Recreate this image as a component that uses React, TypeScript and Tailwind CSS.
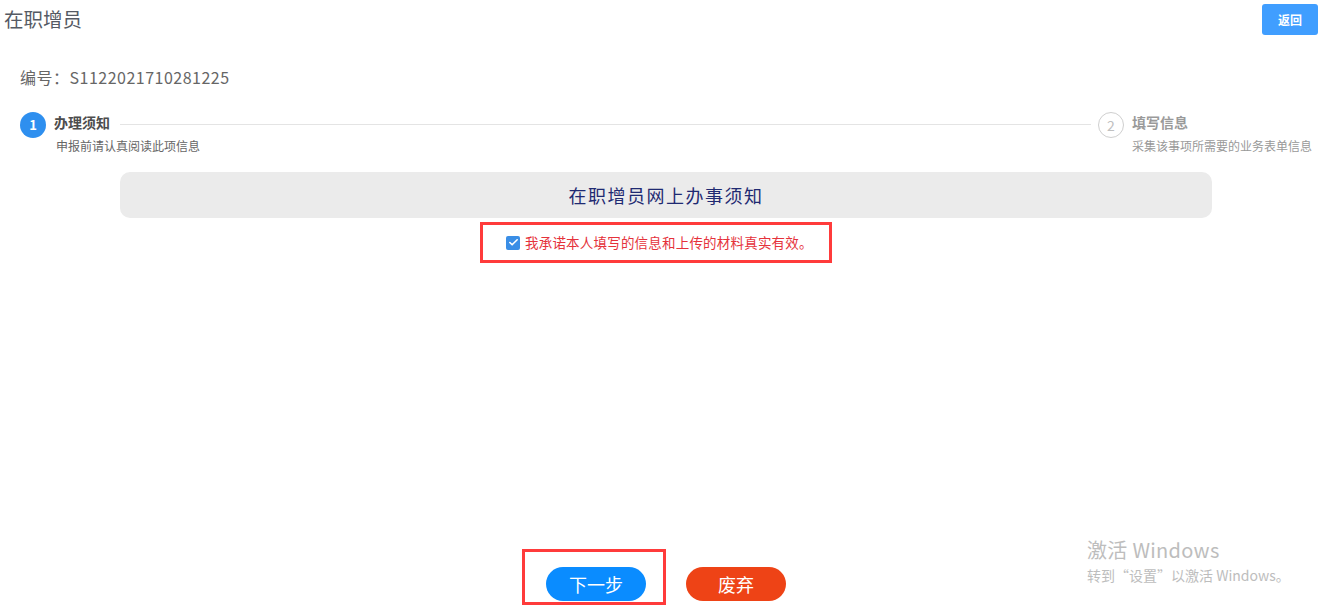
import { Check } from "lucide-react";

const font = { fontFamily: '"Noto Sans CJK SC", "Noto Sans", sans-serif' };

function StepCircle({ n, active }: { n: number; active: boolean }) {
  return (
    <div
      className={
        active
          ? "w-[26px] h-[26px] shrink-0 rounded-full bg-[#2e8fef] text-white text-[13px] font-bold flex items-center justify-center"
          : "w-[26px] h-[26px] shrink-0 rounded-full border border-[#cfcfcf] text-[#c0c0c0] text-[14px] flex items-center justify-center"
      }
    >
      {n}
    </div>
  );
}

export default function App() {
  return (
    <div
      className="relative w-[1324px] h-[608px] bg-white flex flex-col overflow-hidden"
      style={font}
    >
      {/* header */}
      <div className="flex justify-between items-start pt-[4px] pl-[4px] pr-[6px]">
        <h1 className="text-[19.5px] leading-[24px] mt-[3px] text-[#555a64] font-normal">
          在职增员
        </h1>
        <button className="w-[56px] h-[31px] rounded-[3px] bg-[#409eff] text-white text-[12px] font-bold">
          返回
        </button>
      </div>

      <div className="pl-[20px] mt-[32px] text-[16px] leading-[20px] tracking-[0.5px] text-[#666]">
        编号：S1122021710281225
      </div>

      {/* steps */}
      <div className="flex items-start mt-[25px] pl-[20px] pr-[12px]">
        <div className="flex flex-1 items-start">
          <StepCircle n={1} active />
          <div className="ml-[8px] flex-1 flex flex-col">
            <div className="flex items-center h-[20px]">
              <span className="text-[14px] font-bold text-[#4d4d4d] leading-[20px]">
                办理须知
              </span>
              <div className="flex-1 h-px bg-[#e4e4e4] ml-[10px] mr-[7px] mt-[5px]" />
            </div>
            <span className="text-[12px] leading-[18px] text-[#666] mt-[5px] ml-[2px]">
              申报前请认真阅读此项信息
            </span>
          </div>
        </div>
        <div className="flex items-start">
          <StepCircle n={2} active={false} />
          <div className="ml-[8px] flex flex-col">
            <span className="text-[14px] font-bold text-[#9a9a9a] leading-[20px]">
              填写信息
            </span>
            <span className="text-[12px] leading-[18px] text-[#999] mt-[5px]">
              采集该事项所需要的业务表单信息
            </span>
          </div>
        </div>
      </div>

      {/* notice */}
      <div className="ml-[120px] w-[1092px] h-[46px] mt-[17px] rounded-[10px] bg-[#ebebeb] flex items-center justify-center text-[18px] tracking-[1.5px] text-[#1f2a72]">
        在职增员网上办事须知
      </div>

      <div className="ml-[480px] w-[352px] h-[41px] mt-[4px] border-[3px] border-[#ff3b3b] flex items-center pl-[23px]">
        <span className="w-[14px] h-[14px] rounded-[2px] bg-[#3a8ee6] flex items-center justify-center">
          <Check className="w-[11px] h-[11px] text-white" strokeWidth={3.5} />
        </span>
        <span className="ml-[5px] text-[13.5px] tracking-[0.2px] text-[#e5323b]">
          我承诺本人填写的信息和上传的材料真实有效。
        </span>
      </div>

      {/* actions */}
      <div className="mt-auto mb-[3px] ml-[522px] flex items-end">
        <div className="border-[3px] border-[#ff3b3b] pt-[15px] pl-[21px] pr-[17px] pb-[1px]">
          <button className="w-[100px] h-[34px] rounded-full bg-[#0a8cff] text-white text-[18px]">
            下一步
          </button>
        </div>
        <button className="ml-[20px] mb-[4px] w-[100px] h-[34px] rounded-full bg-[#ee4316] text-white text-[18px]">
          废弃
        </button>
      </div>

      {/* windows watermark */}
      <div className="absolute left-[1087px] top-[537px] text-[#bdbdbd] pointer-events-none">
        <div className="text-[20px] leading-[26px] tracking-[0.3px]">激活 Windows</div>
        <div className="text-[14px] leading-[20px] mt-[2px]">
          转到“设置”以激活 Windows。
        </div>
      </div>
    </div>
  );
}
